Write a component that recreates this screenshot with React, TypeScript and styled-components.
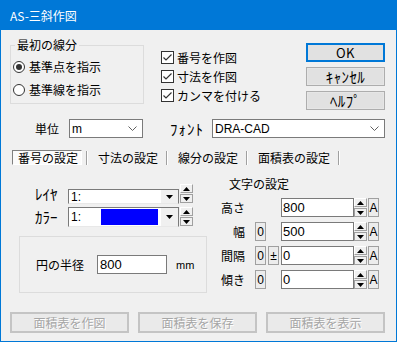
import React from 'react';
import styled, { createGlobalStyle, css } from 'styled-components';

const Global = createGlobalStyle`
  html, body { margin: 0; padding: 0; background: #f0f0f0; }
  body { font-family: "Noto Sans CJK JP", "Liberation Sans", sans-serif; font-size: 12px; color: #000; }
  * { box-sizing: border-box; }
`;

const LATIN = `"Liberation Sans", "Noto Sans CJK JP", sans-serif`;

const Window = styled.div`
  width: 397px;
  height: 342px;
  display: flex;
  flex-direction: column;
  background: #f0f0f0;
  border: 1px solid #0078d7;
  border-top: none;
  font-family: "Noto Sans CJK JP", "Liberation Sans", sans-serif;
  font-size: 12px;
  overflow: hidden;
`;

const TitleBar = styled.div`
  height: 30px;
  flex: none;
  background: #0078d7;
  color: #fff;
  display: flex;
  align-items: center;
  padding-left: 9px;
  font-size: 12px;
`;

const Body = styled.div`
  display: flex;
  flex-direction: column;
  padding: 8px 11px 0 9px;
`;

const TopRow = styled.div`
  display: flex;
  align-items: flex-start;
  height: 72px;
`;

const GroupBox = styled.fieldset`
  margin: 0;
  width: 134px;
  min-width: 0;
  padding: 3px 2px 2px 2px;
  border: 1px solid #dcdcdc;
`;

const Legend = styled.legend`
  padding: 0 2px;
  margin-left: 2px;
  line-height: 14px;
  font-size: 12px;
`;

const RadioRow = styled.label`
  display: flex;
  align-items: center;
  height: 23px;
  gap: 4px;
  white-space: nowrap;
`;

const RadioCircle = styled.span<{ $on?: boolean }>`
  width: 12px;
  height: 12px;
  border-radius: 50%;
  border: 1px solid #333;
  background: #fff;
  display: flex;
  align-items: center;
  justify-content: center;
  &::after {
    content: '';
    width: 6px;
    height: 6px;
    border-radius: 50%;
    background: ${p => (p.$on ? '#333' : 'transparent')};
  }
`;

const CheckCol = styled.div`
  display: flex;
  flex-direction: column;
  margin-left: 17px;
  padding-top: 10px;
`;

const CheckRow = styled.label`
  display: flex;
  align-items: center;
  gap: 3px;
  height: 19px;
  white-space: nowrap;
`;

const CheckBox = styled.span`
  width: 13px;
  height: 13px;
  border: 1px solid #333;
  background: #fff;
  display: flex;
  align-items: center;
  justify-content: center;
`;

const ButtonCol = styled.div`
  margin-left: auto;
  width: 79px;
  padding-top: 5px;
  display: flex;
  flex-direction: column;
  gap: 5px;
`;

const DlgButton = styled.div<{ $default?: boolean; $half?: boolean }>`
  height: 19px;
  display: flex;
  align-items: center;
  justify-content: center;
  background: #e1e1e1;
  border: 1px solid #adadad;
  box-shadow: inset 0 0 0 1px #e6e6e6;
  font-size: ${p => (p.$half ? 15 : 13)}px;
  letter-spacing: ${p => (p.$half ? 0.4 : 0.5)}px;
  ${p =>
    p.$default &&
    css`
      border-color: #0078d7;
      box-shadow: inset 0 0 0 1px #0078d7;
    `}
`;

const UnitRow = styled.div`
  display: flex;
  align-items: center;
  height: 19px;
  margin-top: 9px;
`;

const FieldLabel = styled.span<{ $ml: number; $half?: boolean }>`
  margin-left: ${p => p.$ml}px;
  white-space: nowrap;
  ${p =>
    p.$half &&
    css`
      font-size: 15px;
      letter-spacing: 1px;
    `}
`;

const Combo = styled.div<{ $w?: number; $ml: number }>`
  margin-left: ${p => p.$ml}px;
  ${p => (p.$w ? `width: ${p.$w}px;` : 'flex: 1;')}
  height: 19px;
  border: 1px solid #7a7a7a;
  background: #fff;
  display: flex;
  align-items: center;
  justify-content: space-between;
  padding: 0 5px 0 2px;
  font-family: ${LATIN};
  font-size: 12px;
`;

const TabRow = styled.div`
  display: flex;
  align-items: center;
  height: 15px;
  margin-top: 12px;
  padding-left: 2px;
`;

const Tab = styled.div<{ $pressed?: boolean }>`
  height: 15px;
  padding: 0 3px 0 5px;
  border: 1px solid transparent;
  line-height: 13px;
  white-space: nowrap;
  ${p =>
    p.$pressed &&
    css`
      border-color: #808080 #fff #fff #808080;
      background: #fbfbfb;
    `}
`;

const TabSep = styled.span`
  width: 2px;
  height: 14px;
  margin: 1px 4px 0 4px;
  border-left: 1px solid #a0a0a0;
  border-right: 1px solid #fff;
`;

const Content = styled.div`
  display: grid;
  grid-template-columns: 197px 157px;
  column-gap: 15px;
  margin-top: 12px;
`;

const LeftCol = styled.div`
  display: flex;
  flex-direction: column;
  padding-top: 6px;
`;

const PickRow = styled.div<{ $h: number; $mt: number }>`
  display: grid;
  grid-template-columns: 32px 111px 13px;
  column-gap: 1px;
  height: ${p => p.$h}px;
  margin-top: ${p => p.$mt}px;
  margin-left: 25px;
  align-items: center;
`;

const HalfLabel = styled.span`
  font-size: 15px;
  letter-spacing: 0;
  white-space: nowrap;
`;

const OwnerCombo = styled.div<{ $h: number }>`
  height: ${p => p.$h}px;
  align-self: end;
  border: 1px solid #7a7a7a;
  border-bottom-color: #e8e8e8;
  background: #fff;
  display: flex;
  align-items: center;
  font-family: ${LATIN};
  font-size: 12px;
`;

const ComboText = styled.span`
  padding-left: 2px;
  width: 32px;
`;

const Swatch = styled.span`
  width: 57px;
  height: 16px;
  background: #0000ff;
`;

const DropBtn = styled.span`
  margin-left: auto;
  width: 17px;
  align-self: stretch;
  background: #f0f0f0;
  display: flex;
  align-items: center;
  justify-content: center;
`;

const Spin = styled.div`
  display: flex;
  flex-direction: column;
  gap: 1px;
  height: 19px;
  align-self: center;
`;

const SpinBtn = styled.span<{ $down?: boolean }>`
  width: 13px;
  height: 9px;
  display: flex;
  align-items: center;
  justify-content: center;
  background: #f0f0f0;
  border: 1px solid;
  border-color: ${p => (p.$down ? '#a0a0a0' : '#fff #a0a0a0 #a0a0a0 #fff')};
`;

const CircleBox = styled.div`
  margin-top: 10px;
  margin-left: 9px;
  width: 188px;
  height: 57px;
  border: 1px solid #dcdcdc;
  display: flex;
  align-items: center;
  padding-left: 16px;
`;

const TextInput = styled.div<{ $w?: number; $ml?: number }>`
  ${p => (p.$w ? `width: ${p.$w}px;` : '')}
  margin-left: ${p => p.$ml ?? 0}px;
  height: 19px;
  border: 1px solid #7a7a7a;
  background: #fff;
  display: flex;
  align-items: center;
  padding-left: 2px;
  font-family: ${LATIN};
  font-size: 13px;
`;

const Unit = styled.span`
  margin-left: 9px;
  font-family: ${LATIN};
  font-size: 11px;
`;

const RightCol = styled.div`
  display: flex;
  flex-direction: column;
`;

const SectionTitle = styled.div`
  padding-left: 7px;
  line-height: 14px;
  height: 14px;
`;

const ParamGrid = styled.div`
  display: grid;
  grid-template-columns: 33px 13px 13px 73px 13px 12px;
  grid-auto-rows: 19px;
  row-gap: 5px;
  margin-top: 7px;
`;

const ParamLabel = styled.span`
  grid-column: 1;
  justify-self: end;
  padding-right: 10px;
  align-self: center;
  white-space: nowrap;
`;

const SmallBox = styled.span<{ $col: number }>`
  grid-column: ${p => p.$col};
  width: 11px;
  height: 19px;
  border: 1px solid #a0a0a0;
  background: #ececec;
  display: flex;
  align-items: center;
  justify-content: center;
  font-family: ${LATIN};
  font-size: 12px;
`;

const InputCell = styled(TextInput)`
  grid-column: 4;
  padding-left: 1px;
`;

const SpinCell = styled(Spin)`
  grid-column: 5;
`;

const AButton = styled(SmallBox)`
  justify-self: end;
`;

const BottomRow = styled.div`
  display: flex;
  gap: 9px;
  margin-top: 19px;
`;

const DisabledButton = styled.div`
  width: 119px;
  height: 21px;
  border: 2px solid #c4c4c4;
  background: #eaeaea;
  color: #a6a6a6;
  text-shadow: 1px 1px 0 #fff;
  display: flex;
  align-items: center;
  justify-content: center;
`;

const Check = () => (
  <svg width="11" height="11" viewBox="0 0 11 11">
    <path d="M1.5 5.5 L4 8 L9.5 2.5" stroke="#333" strokeWidth="1.2" fill="none" />
  </svg>
);

const Chevron = () => (
  <svg width="9" height="5" viewBox="0 0 9 5">
    <path d="M0.5 0.5 L4.5 4.5 L8.5 0.5" stroke="#606060" strokeWidth="1" fill="none" />
  </svg>
);

const TriDown = () => (
  <svg width="7" height="4" viewBox="0 0 7 4">
    <polygon points="0,0 7,0 3.5,4" fill="#000" />
  </svg>
);

const TriUp = () => (
  <svg width="7" height="4" viewBox="0 0 7 4">
    <polygon points="0,4 7,4 3.5,0" fill="#000" />
  </svg>
);

const SpinPair = ({ cell }: { cell?: boolean }) => {
  const inner = (
    <>
      <SpinBtn>
        <TriUp />
      </SpinBtn>
      <SpinBtn $down>
        <TriDown />
      </SpinBtn>
    </>
  );
  return cell ? <SpinCell>{inner}</SpinCell> : <Spin>{inner}</Spin>;
};

const params = [
  { label: '高さ', value: '800', zero: false, pm: false },
  { label: '幅', value: '500', zero: true, pm: false },
  { label: '間隔', value: '0', zero: true, pm: true },
  { label: '傾き', value: '0', zero: true, pm: false },
];

const tabs = ['番号の設定', '寸法の設定', '線分の設定', '面積表の設定'];

export default function App() {
  return (
    <>
      <Global />
      <Window>
        <TitleBar>AS-三斜作図</TitleBar>
        <Body>
          <TopRow>
            <GroupBox>
              <Legend>最初の線分</Legend>
              <RadioRow>
                <RadioCircle $on />
                基準点を指示
              </RadioRow>
              <RadioRow>
                <RadioCircle />
                基準線を指示
              </RadioRow>
            </GroupBox>
            <CheckCol>
              {['番号を作図', '寸法を作図', 'カンマを付ける'].map(t => (
                <CheckRow key={t}>
                  <CheckBox>
                    <Check />
                  </CheckBox>
                  {t}
                </CheckRow>
              ))}
            </CheckCol>
            <ButtonCol>
              <DlgButton $default>OK</DlgButton>
              <DlgButton $half>ｷｬﾝｾﾙ</DlgButton>
              <DlgButton $half>ﾍﾙﾌﾟ</DlgButton>
            </ButtonCol>
          </TopRow>

          <UnitRow>
            <FieldLabel $ml={25}>単位</FieldLabel>
            <Combo $ml={10} $w={74}>
              m
              <Chevron />
            </Combo>
            <FieldLabel $ml={27} $half>
              ﾌｫﾝﾄ
            </FieldLabel>
            <Combo $ml={8}>
              DRA-CAD
              <Chevron />
            </Combo>
          </UnitRow>

          <TabRow>
            {tabs.map((t, i) => (
              <React.Fragment key={t}>
                <Tab $pressed={i === 0}>{t}</Tab>
                <TabSep />
              </React.Fragment>
            ))}
          </TabRow>

          <Content>
            <LeftCol>
              <PickRow $h={19} $mt={0}>
                <HalfLabel>ﾚｲﾔ</HalfLabel>
                <OwnerCombo $h={15}>
                  <ComboText>1:</ComboText>
                  <DropBtn>
                    <TriDown />
                  </DropBtn>
                </OwnerCombo>
                <SpinPair />
              </PickRow>
              <PickRow $h={20} $mt={4}>
                <HalfLabel>ｶﾗｰ</HalfLabel>
                <OwnerCombo $h={20}>
                  <ComboText>1:</ComboText>
                  <Swatch />
                  <DropBtn>
                    <TriDown />
                  </DropBtn>
                </OwnerCombo>
                <SpinPair />
              </PickRow>
              <CircleBox>
                円の半径
                <TextInput $w={70} $ml={13}>800</TextInput>
                <Unit>mm</Unit>
              </CircleBox>
            </LeftCol>

            <RightCol>
              <SectionTitle>文字の設定</SectionTitle>
              <ParamGrid>
                {params.map(p => (
                  <React.Fragment key={p.label}>
                    <ParamLabel>{p.label}</ParamLabel>
                    {p.zero && <SmallBox $col={2}>0</SmallBox>}
                    {p.pm && <SmallBox $col={3}>±</SmallBox>}
                    <InputCell>{p.value}</InputCell>
                    <SpinPair cell />
                    <AButton $col={6}>A</AButton>
                  </React.Fragment>
                ))}
              </ParamGrid>
            </RightCol>
          </Content>

          <BottomRow>
            <DisabledButton>面積表を作図</DisabledButton>
            <DisabledButton>面積表を保存</DisabledButton>
            <DisabledButton>面積表を表示</DisabledButton>
          </BottomRow>
        </Body>
      </Window>
    </>
  );
}
